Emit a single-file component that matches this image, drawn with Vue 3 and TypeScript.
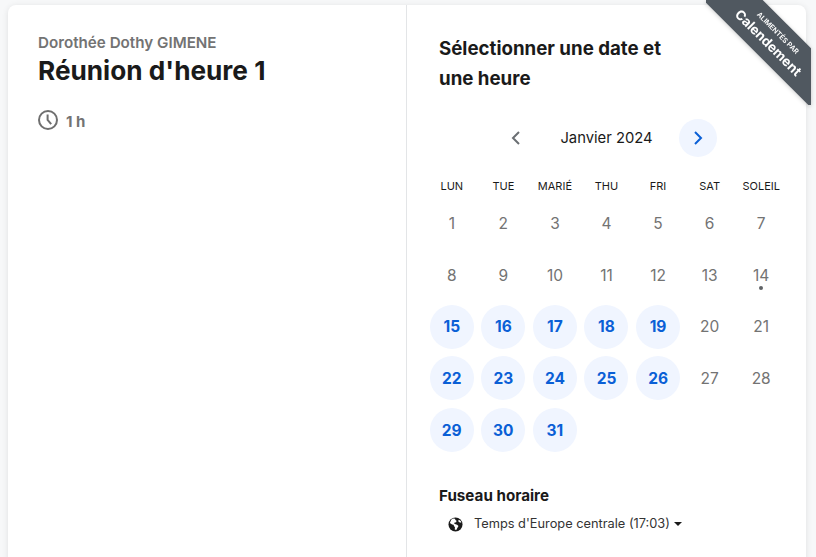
<script setup lang="ts">
const weekdays = ["LUN", "TUE", "MARIÉ", "THU", "FRI", "SAT", "SOLEIL"];

// Janvier 2024 starts on a Monday, the 15th to 31st on weekdays are bookable
const days = Array.from({ length: 31 }, (_, i) => {
  const day = i + 1;
  const weekday = i % 7;
  return {
    day,
    available: day >= 15 && weekday < 5,
    today: day === 14,
  };
});
</script>

<template>
  <main class="page">
    <div class="card">
      <section class="event">
        <h2 class="event__owner">Dorothée Dothy GIMENE</h2>
        <h1 class="event__title">Réunion d'heure 1</h1>
        <div class="event__duration">
          <svg class="event__clock" viewBox="0 0 20 20" width="20" height="20" fill="none">
            <circle cx="10" cy="10" r="9" stroke="#6f6f6f" stroke-width="2" />
            <path d="M9.6 4.4V10l3.6 4.2" stroke="#6f6f6f" stroke-width="2" />
          </svg>
          <span class="event__length">1 h</span>
        </div>
      </section>

      <section class="picker">
        <h2 class="picker__title">Sélectionner une date et une heure</h2>

        <div class="month">
          <button type="button" class="month__btn" aria-label="Mois précédent">
            <svg viewBox="0 0 12 16" width="12" height="16" fill="none">
              <path d="M9 2 3 8l6 6" stroke="#6b6f73" stroke-width="2" />
            </svg>
          </button>
          <span class="month__label">Janvier 2024</span>
          <button type="button" class="month__btn month__btn--next" aria-label="Mois suivant">
            <svg viewBox="0 0 12 16" width="12" height="16" fill="none">
              <path d="m3 2 6 6-6 6" stroke="#0a5fd6" stroke-width="2" />
            </svg>
          </button>
        </div>

        <div class="calendar">
          <div v-for="name in weekdays" :key="name" class="calendar__head">{{ name }}</div>
          <div v-for="d in days" :key="d.day" class="calendar__cell">
            <button
              type="button"
              :class="['calendar__day', { 'calendar__day--open': d.available }]"
            >
              {{ d.day }}
              <i v-if="d.today" class="calendar__dot" />
            </button>
          </div>
        </div>

        <div class="zone">
          <h3 class="zone__title">Fuseau horaire</h3>
          <div class="zone__select">
            <svg viewBox="0 0 16 16" width="15" height="15">
              <circle cx="8" cy="8" r="7.5" fill="#1a1a1a" />
              <path
                d="M5.2 1.6 3.4 3 2 6.4l2.4 1.5 1.6.4.4 1.5 1 .9-.2 2.6 1.6.6 1.6-3 .8-1.4-1.5-1.2-2.4-.8-1-1 1.2-.6 1.2-.2.4-1.6-1.2-.8-.4-1.4Z"
                fill="#fff"
              />
              <path d="m11.6 2.8-.8 1.4 1.2 1.4 2.2.6-.6-2Z" fill="#fff" />
            </svg>
            <span>Temps d'Europe centrale (17:03)</span>
            <i class="zone__caret" />
          </div>
        </div>
      </section>

      <div class="ribbon">
        <div class="ribbon__band">
          <span class="ribbon__small">ALIMENTÉS PAR</span>
          <span class="ribbon__big">Calendement</span>
        </div>
      </div>
    </div>
  </main>
</template>

<style>
html,
body {
  margin: 0;
  height: 100%;
  overflow: hidden;
  background: #f7f8f9;
}
</style>

<style scoped>
.page {
  height: 557px;
  padding: 5px 10px 0 8px;
  box-sizing: border-box;
  overflow: hidden;
  font-family: Inter, "Liberation Sans", sans-serif;
}

.card {
  position: relative;
  display: grid;
  grid-template-columns: 399px 1fr;
  height: 600px;
  background: #fff;
  border-radius: 8px;
  box-shadow: 0 1px 6px rgba(0, 0, 0, 0.1);
}

.event {
  padding: 29px 30px;
  border-right: 1px solid #e3e5e7;
}

.event__owner {
  margin: 0;
  color: #737373;
  font-size: 15.2px;
  line-height: 18px;
  font-weight: 600;
}

.event__title {
  margin: 1px 0 0;
  color: #1a1a1a;
  font-size: 26.2px;
  line-height: 36px;
  font-weight: 700;
}

.event__duration {
  display: flex;
  align-items: center;
  gap: 8px;
  margin-top: 21px;
  color: #737373;
  font-size: 15px;
  font-weight: 700;
}

.event__length {
  position: relative;
  top: 1px;
}

.picker {
  padding: 29px 19px 0;
  min-width: 0;
}

.picker__title {
  width: 240px;
  margin: 0 0 0 13px;
  color: #1a1a1a;
  font-size: 18.7px;
  line-height: 30px;
  font-weight: 700;
}

.month {
  display: flex;
  align-items: center;
  justify-content: center;
  margin-top: 25px;
}

.month__btn {
  display: flex;
  align-items: center;
  justify-content: center;
  width: 38px;
  height: 38px;
  padding: 0;
  background: none;
  border: 0;
  border-radius: 50%;
}

.month__btn--next {
  background: #f0f5ff;
}

.month__label {
  width: 144px;
  color: #1a1a1a;
  font-size: 14.8px;
  text-align: center;
}

.calendar {
  display: grid;
  grid-template-columns: repeat(7, 1fr);
  grid-template-rows: 24px;
  grid-auto-rows: 51.7px;
  width: 361px;
  margin-top: 16.5px;
}

.calendar__head {
  display: flex;
  align-items: center;
  justify-content: center;
  color: #1a1a1a;
  font-size: 11px;
  white-space: nowrap;
}

.calendar__cell {
  display: flex;
  align-items: center;
  justify-content: center;
}

.calendar__day {
  position: relative;
  width: 44px;
  height: 44px;
  padding: 0;
  color: #737373;
  font-family: inherit;
  font-size: 15.5px;
  font-weight: 400;
  background: none;
  border: 0;
  border-radius: 50%;
}

.calendar__day--open {
  color: #0a5fd6;
  font-weight: 700;
  background: #f0f5ff;
}

.calendar__dot {
  position: absolute;
  left: 20px;
  bottom: 7px;
  width: 4px;
  height: 4px;
  background: #5f6266;
  border-radius: 50%;
}

.zone {
  margin: 30.5px 0 0 13px;
}

.zone__title {
  margin: 0;
  color: #1a1a1a;
  font-size: 15.2px;
  line-height: 20px;
  font-weight: 700;
}

.zone__select {
  display: flex;
  align-items: center;
  gap: 11px;
  margin: 8px 0 0 9px;
  color: #333;
  font-size: 12.8px;
  line-height: 20px;
}

.zone__caret {
  width: 0;
  height: 0;
  margin-left: -7px;
  border: 4px solid transparent;
  border-top-color: #1a1a1a;
  border-bottom: 0;
}

.ribbon {
  position: absolute;
  top: -5px;
  right: -5px;
  width: 105px;
  height: 105px;
  overflow: hidden;
  filter: drop-shadow(0 1px 2px rgba(0, 0, 0, 0.2));
}

.ribbon__band {
  position: absolute;
  top: 18px;
  left: -9px;
  display: flex;
  flex-direction: column;
  align-items: center;
  justify-content: center;
  box-sizing: border-box;
  width: 150px;
  height: 42px;
  color: #fff;
  background: #505860;
  transform: rotate(45deg);
}

.ribbon__small {
  font-size: 7px;
  line-height: 10px;
  font-weight: 600;
}

.ribbon__big {
  font-size: 13.4px;
  line-height: 17px;
  font-weight: 700;
}
</style>
